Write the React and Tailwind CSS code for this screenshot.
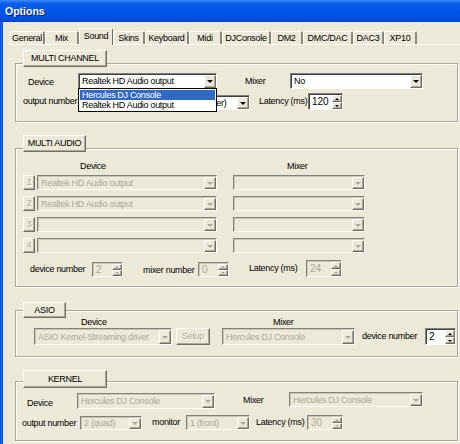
import React from "react";
import clsx from "clsx";

const T = "text-[9px] tracking-[-0.3px] leading-none whitespace-nowrap";

function Tri({ up, disabled }) {
  return (
    <div
      className={clsx(
        "w-0 h-0 border-l-[3px] border-r-[3px] border-l-transparent border-r-transparent",
        up ? "border-b-[3px]" : "border-t-[3px]",
        up
          ? disabled
            ? "border-b-[#aca899]"
            : "border-b-black"
          : disabled
          ? "border-t-[#aca899]"
          : "border-t-black"
      )}
    />
  );
}

function SmallTri({ up, disabled }) {
  return (
    <div
      className={clsx(
        "w-0 h-0 border-l-[2px] border-r-[2px] border-l-transparent border-r-transparent",
        up ? "border-b-[2px]" : "border-t-[2px]",
        up
          ? disabled
            ? "border-b-[#aca899]"
            : "border-b-black"
          : disabled
          ? "border-t-[#aca899]"
          : "border-t-black"
      )}
    />
  );
}

const raised =
  "bg-[#ece9d8] border border-t-white border-l-white border-b-[#716f64] border-r-[#716f64] shadow-[inset_-1px_-1px_0_#aca899]";

function Combo({ w, h = "h-[16px]", text, disabled, className }) {
  return (
    <div
      className={clsx(
        "flex shrink-0 border border-t-[#808080] border-l-[#808080] border-b-white border-r-white pt-px pl-px",
        w,
        h,
        className,
        disabled
          ? "bg-[#ece9d8] shadow-[inset_1px_1px_0_#c9c6b6]"
          : "bg-white shadow-[inset_1px_1px_0_#404040]"
      )}
    >
      <div
        className={clsx(
          "flex-1 min-w-0 overflow-hidden flex items-center pl-[2px]",
          T,
          disabled ? "text-[#aca899]" : "text-black"
        )}
      >
        {text}
      </div>
      <div className={clsx("w-[12px] shrink-0 flex items-center justify-center", raised)}>
        <Tri disabled={disabled} />
      </div>
    </div>
  );
}

function Spinner({ w, h = "h-[17px]", value, disabled, className }) {
  return (
    <div
      className={clsx(
        "flex shrink-0 border border-t-[#808080] border-l-[#808080] border-b-white border-r-white pt-px pl-px",
        w,
        h,
        className,
        disabled
          ? "bg-[#ece9d8] shadow-[inset_1px_1px_0_#c9c6b6]"
          : "bg-white shadow-[inset_1px_1px_0_#404040]"
      )}
    >
      <div
        className={clsx(
          "flex-1 flex items-center pl-[2px]",
          "text-[10px] leading-none",
          disabled ? "text-[#aca899]" : "text-black"
        )}
      >
        {value}
      </div>
      <div className="w-[10px] shrink-0 flex flex-col">
        <div className={clsx("flex-1 flex items-center justify-center", raised)}>
          <SmallTri up disabled={disabled} />
        </div>
        <div className={clsx("flex-1 flex items-center justify-center", raised)}>
          <SmallTri disabled={disabled} />
        </div>
      </div>
    </div>
  );
}

function Btn({ w, h, children, disabled, className }) {
  return (
    <div
      className={clsx(
        "shrink-0 flex items-center justify-center",
        raised,
        T,
        w,
        h,
        className,
        disabled ? "text-[#aca899] [text-shadow:1px_1px_0_#fff]" : "text-black"
      )}
    >
      {children}
    </div>
  );
}

function L({ w, className, children }) {
  return <span className={clsx("shrink-0 text-black", T, w, className)}>{children}</span>;
}

const frame =
  "relative w-[443px] ml-[12px] border border-[#aca899] shadow-[inset_1px_1px_0_#fff,1px_1px_0_#fff] flex flex-col";

function Legend({ w, h, className, children }) {
  return (
    <Btn w={w} h={h} className={clsx("relative z-10 ml-[20px]", className)}>
      {children}
    </Btn>
  );
}

const tabs = [
  ["General", "w-[35px]"],
  ["Mix", "w-[34px]"],
  ["Sound", "w-[34px]"],
  ["Skins", "w-[32px]"],
  ["Keyboard", "w-[44px]"],
  ["Midi", "w-[33px]"],
  ["DJConsole", "w-[49px]"],
  ["DM2", "w-[32px]"],
  ["DMC/DAC", "w-[50px]"],
  ["DAC3", "w-[31px]"],
  ["XP10", "w-[33px]"],
];

export default function App() {
  return (
    <div className="w-[460px] h-[444px] overflow-hidden bg-[#ece9d8] font-['Liberation_Sans',Arial,sans-serif] flex flex-col">
      <div className="h-[22px] shrink-0 flex items-center pl-[5px] bg-[linear-gradient(to_bottom,#3f8cf3_0%,#0a5ff0_15%,#0055e5_50%,#0050df_80%,#0046cf_100%)]">
        <span className="text-white font-bold text-[10.5px] leading-none [text-shadow:1px_1px_0_#0a1e8c]">
          Options
        </span>
      </div>
      <div className="flex flex-1 min-h-0">
        <div className="w-[3px] shrink-0 bg-[linear-gradient(to_right,#0842c8,#166cf5,#0a4fdc)]" />
        <div className="flex-1 flex flex-col">
          <div className="h-[22px] flex items-end pl-[7px]">
            {tabs.map(([name, w]) =>
              name === "Sound" ? (
                <div
                  key={name}
                  className={clsx(
                    "relative z-10 -mb-px h-[17px] flex items-center justify-center bg-[#ece9d8] border-t border-l border-r border-t-white border-l-white border-r-[#716f64] rounded-t-[2px] pb-[2px] text-black",
                    T,
                    w
                  )}
                >
                  {name}
                </div>
              ) : (
                <div
                  key={name}
                  className={clsx(
                    "h-[13px] flex items-center justify-center border-t border-l border-r-2 border-t-white border-l-white border-r-[#8a887c] rounded-t-[2px] text-black",
                    T,
                    w
                  )}
                >
                  {name}
                </div>
              )
            )}
          </div>
          <div className="h-px ml-[5px] bg-white" />

          {/* MULTI CHANNEL */}
          <Legend w="w-[84px]" h="h-[17px]" className="mt-[5px]">
            MULTI CHANNEL
          </Legend>
          <div className={clsx(frame, "-mt-[4px] h-[59px]")}>
            <div className="mt-[9px] h-[16px] flex items-center">
              <L w="w-[50px]" className="ml-[12px] mt-[3px]">Device</L>
              <Combo w="w-[139px]" text="Realtek HD Audio output" />
              <L w="w-[45px]" className="ml-[28px]">Mixer</L>
              <Combo w="w-[133px]" text="No" />
            </div>
            <div className="mt-[4px] h-[17px] flex items-center">
              <L w="w-[55px]" className="ml-[7px]">output number</L>
              <Combo
                w="w-[172px]"
                h="h-[15px]"
                className="self-end"
                text="2 (stereo, monitoring via main speaker)"
              />
              <L w="w-[49px]" className="ml-[9px]">Latency (ms)</L>
              <Spinner w="w-[35px]" value="120" />
            </div>
            <div className="absolute left-[62px] top-[24px] w-[139px] h-[24px] border border-black bg-white z-20 flex flex-col p-px">
              <div className={clsx("h-[11px] flex items-center pl-[2px] bg-[#316ac5] text-white", T)}>
                Hercules DJ Console
              </div>
              <div className={clsx("h-[11px] flex items-center pl-[2px] text-black", T)}>
                Realtek HD Audio output
              </div>
            </div>
          </div>

          {/* MULTI AUDIO */}
          <Legend w="w-[63px]" h="h-[17px]" className="mt-[13px]">
            MULTI AUDIO
          </Legend>
          <div className={clsx(frame, "-mt-[4px] h-[139px]")}>
            <div className="mt-[12px] h-[10px] flex items-center">
              <L w="w-[207px]" className="ml-[64px]">Device</L>
              <L w="w-[40px]">Mixer</L>
            </div>
            {["1", "2", "3", "4"].map((n, i) => (
              <div key={n} className={clsx("h-[15px] flex items-center", i === 0 ? "mt-[4px]" : "mt-[6px]")}>
                <Btn w="w-[12px]" h="h-[15px]" disabled className="ml-[7px]">
                  {n}
                </Btn>
                <Combo
                  w="w-[180px]"
                  h="h-[15px]"
                  className="ml-[2px]"
                  disabled
                  text={i < 2 ? "Realtek HD Audio output" : ""}
                />
                <Combo w="w-[132px]" h="h-[15px]" className="ml-[16px]" disabled text="" />
              </div>
            ))}
            <div className="mt-[7px] h-[17px] flex items-center">
              <L w="w-[62px]" className="ml-[14px] mt-[2px]">device number</L>
              <Spinner w="w-[31px]" h="h-[15px]" className="self-end" value="2" disabled />
              <L w="w-[55px]" className="ml-[20px] mt-[4px]">mixer number</L>
              <Spinner w="w-[31px]" h="h-[15px]" className="self-end" value="0" disabled />
              <L w="w-[57px]" className="ml-[20px]">Latency (ms)</L>
              <Spinner w="w-[36px]" value="24" disabled />
            </div>
          </div>

          {/* ASIO */}
          <Legend w="w-[43px]" h="h-[16px]" className="mt-[15px]">
            ASIO
          </Legend>
          <div className={clsx(frame, "-mt-[8px] h-[47px]")}>
            <div className="mt-[6px] h-[10px] flex items-center">
              <L w="w-[192px]" className="ml-[65px]">Device</L>
              <L w="w-[40px]">Mixer</L>
            </div>
            <div className="mt-[1px] h-[17px] flex items-center">
              <Combo w="w-[138px]" h="h-[17px]" className="ml-[18px]" disabled text="ASIO Kernel-Streaming driver" />
              <Btn w="w-[34px]" h="h-[17px]" disabled className="ml-[4px]">
                Setup
              </Btn>
              <Combo w="w-[133px]" h="h-[17px]" className="ml-[12px]" disabled text="Hercules DJ Console" />
              <L w="w-[63px]" className="ml-[7px]">device number</L>
              <Spinner w="w-[31px]" value="2" />
            </div>
          </div>

          {/* KERNEL */}
          <Legend w="w-[84px]" h="h-[18px]" className="mt-[13px]">
            KERNEL
          </Legend>
          <div className={clsx(frame, "-mt-[7px] h-[60px]")}>
            <div className="mt-[10px] h-[17px] flex items-center">
              <L w="w-[50px]" className="ml-[11px] mt-[6px]">Device</L>
              <Combo w="w-[138px]" h="h-[16px]" className="self-end" disabled text="Hercules DJ Console" />
              <L w="w-[46px]" className="ml-[28px]">Mixer</L>
              <Combo w="w-[134px]" h="h-[15px]" className="self-start" disabled text="Hercules DJ Console" />
            </div>
            <div className="mt-[6px] h-[15px] flex items-center">
              <L w="w-[58px]" className="ml-[6px] mt-[1px]">output number</L>
              <Combo w="w-[62px]" h="h-[14px]" disabled text="2 (quad)" />
              <L w="w-[34px]" className="ml-[10px]">monitor</L>
              <Combo w="w-[64px]" h="h-[15px]" disabled text="1 (front)" />
              <L w="w-[51px]" className="ml-[6px]">Latency (ms)</L>
              <Spinner w="w-[36px]" h="h-[15px]" value="30" disabled />
            </div>
          </div>
        </div>
      </div>
    </div>
  );
}
